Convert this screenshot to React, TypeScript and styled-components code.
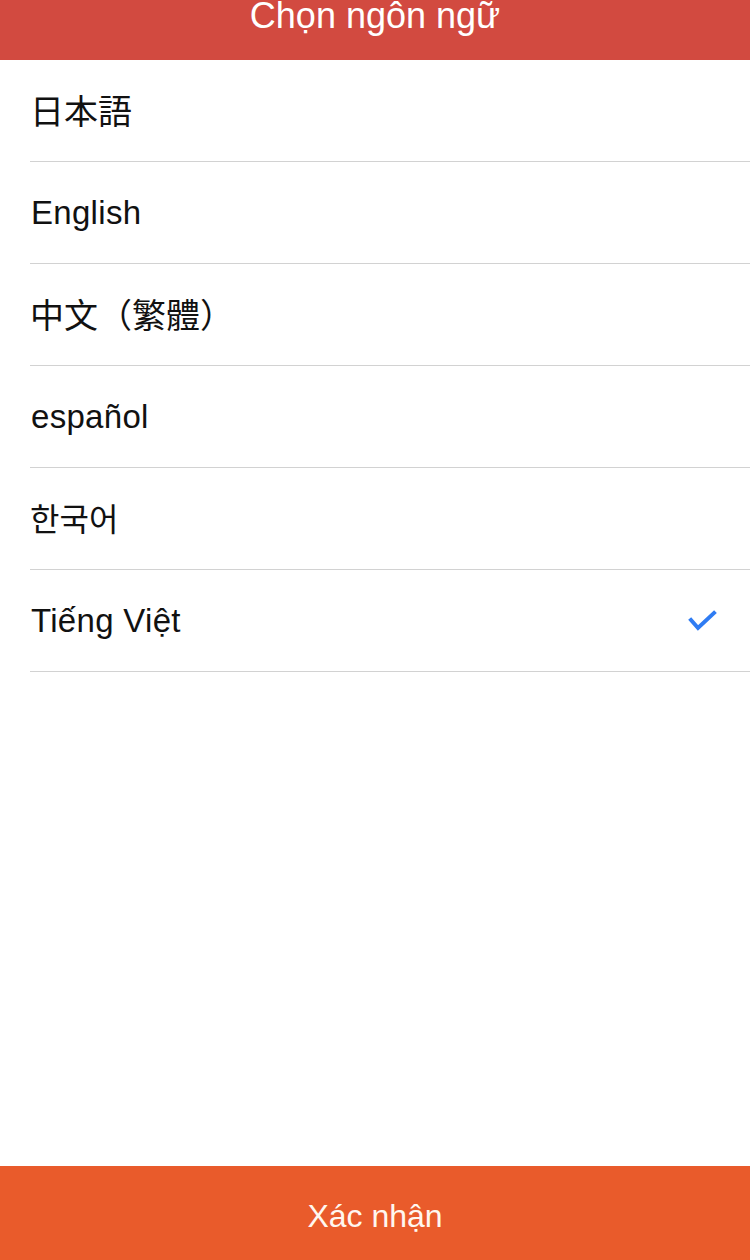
import React, { useState } from "react";
import styled, { createGlobalStyle } from "styled-components";

const Global = createGlobalStyle`
  html, body { margin: 0; padding: 0; background: #ffffff; }
  body { font-family: "Liberation Sans", Arial, sans-serif; }
  * { box-sizing: border-box; }
`;

const Page = styled.div`
  width: 750px;
  height: 1260px;
  display: flex;
  flex-direction: column;
  background: #ffffff;
  overflow: hidden;
`;

const Header = styled.header`
  height: 60px;
  flex: none;
  background: #d24a40;
  display: flex;
  justify-content: center;
  align-items: flex-start;
`;

const Title = styled.h1`
  margin: 0;
  font-family: "Liberation Sans", Arial, sans-serif;
  font-weight: 400;
  font-size: 36px;
  line-height: 31px;
  color: #ffffff;
`;

const List = styled.ul`
  list-style: none;
  margin: 0;
  padding: 0;
  flex: 1;
`;

const Row = styled.li`
  height: 102px;
  margin-left: 30px;
  padding-right: 32px;
  border-bottom: 1px solid #d2d2d2;
  display: flex;
  align-items: center;
  justify-content: space-between;
  cursor: pointer;
`;

const Label = styled.span<{ $lang?: string }>`
  font-family: ${(p) =>
    p.$lang === "ja"
      ? `"Noto Sans CJK JP", sans-serif`
      : p.$lang === "zh"
      ? `"Noto Sans CJK TC", sans-serif`
      : p.$lang === "ko"
      ? `"Noto Sans CJK KR", sans-serif`
      : `"Liberation Sans", Arial, sans-serif`};
  font-size: ${(p) =>
    p.$lang === "ko" ? "32px" : p.$lang ? "34px" : "33px"};
  letter-spacing: ${(p) => (p.$lang ? "0" : "0.3px")};
  color: #111111;
  margin-left: ${(p) => (p.$lang ? "0" : "1px")};
  margin-top: ${(p) => (p.$lang ? "-3px" : "0")};
`;

const Footer = styled.button`
  flex: none;
  height: 94px;
  width: 100%;
  border: none;
  background: #e95b2b;
  color: #fff7f0;
  font-family: "Liberation Sans", Arial, sans-serif;
  font-size: 32px;
  display: flex;
  align-items: center;
  justify-content: center;
  padding: 6px 0 0;
`;

const Check = () => (
  <svg width="30" height="24" viewBox="0 0 30 24" aria-hidden>
    <polyline
      points="3,11 10,19 26,4"
      fill="none"
      stroke="#2f7cf3"
      strokeWidth="4"
      strokeLinecap="square"
      strokeLinejoin="miter"
    />
  </svg>
);

const languages: { label: string; lang?: string }[] = [
  { label: "日本語", lang: "ja" },
  { label: "English" },
  { label: "中文（繁體）", lang: "zh" },
  { label: "español" },
  { label: "한국어", lang: "ko" },
  { label: "Tiếng Việt" },
];

export default function App() {
  const [selected, setSelected] = useState(5);
  return (
    <>
      <Global />
      <Page>
        <Header>
          <Title>Chọn ngôn ngữ</Title>
        </Header>
        <List>
          {languages.map((l, i) => (
            <Row key={l.label} onClick={() => setSelected(i)}>
              <Label $lang={l.lang}>{l.label}</Label>
              {selected === i && <Check />}
            </Row>
          ))}
        </List>
        <Footer>Xác nhận</Footer>
      </Page>
    </>
  );
}
